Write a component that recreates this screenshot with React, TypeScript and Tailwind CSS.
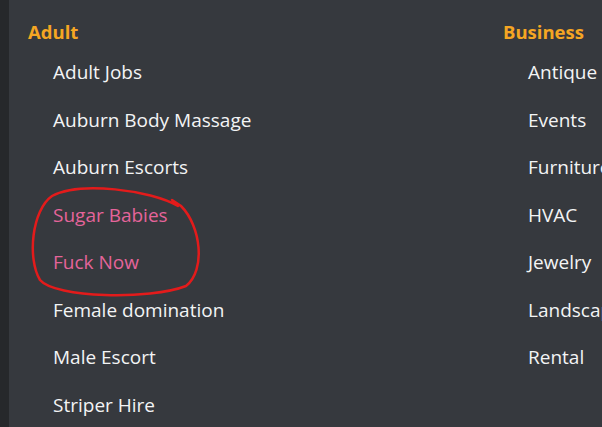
import React from "react"

const adult = [
  { label: "Adult Jobs" },
  { label: "Auburn Body Massage" },
  { label: "Auburn Escorts" },
  { label: "Sugar Babies", hot: true },
  { label: "Fuck Now", hot: true },
  { label: "Female domination" },
  { label: "Male Escort" },
  { label: "Striper Hire" },
]

const business = ["Antique", "Events", "Furniture", "HVAC", "Jewelry", "Landscaping", "Rental"]

function Column({ title, items }: { title: string; items: { label: string; hot?: boolean }[] }) {
  return (
    <div className="flex flex-col">
      <h3 className="h-[24px] leading-[24px] text-[18.5px] font-bold text-[#f5a623] mt-[20px]">{title}</h3>
      <ul className="pl-[25px] mt-[5px]">
        {items.map((it) => (
          <li
            key={it.label}
            className={
              "h-[47.5px] leading-[47.5px] text-[19px] whitespace-nowrap " +
              (it.hot ? "text-[#e5649a]" : "text-[#f3f4f5]")
            }
          >
            {it.label}
          </li>
        ))}
      </ul>
    </div>
  )
}

export default function App() {
  return (
    <div
      className="flex w-[602px] h-[427px] overflow-hidden bg-[#36393e]"
      style={{ fontFamily: '"Segoe UI", "Open Sans", sans-serif' }}
    >
      <div className="w-[9px] shrink-0 bg-[#26282b]" />
      <div className="relative flex pl-[19px]">
        <div className="w-[475px] shrink-0">
          <Column title="Adult" items={adult} />
        </div>
        <div className="shrink-0">
          <Column title="Business" items={business.map((b) => ({ label: b }))} />
        </div>
        {/* hand-drawn annotation */}
        <svg
          className="absolute left-[-9px] top-0 pointer-events-none"
          width="240"
          height="320"
          viewBox="0 0 240 320"
        >
          <path
            d="M178 206 C150 190, 80 181, 52 196 C32 210, 27 258, 40 280 C55 298, 150 300, 186 286 C206 270, 201 226, 181 206 L172 200"
            fill="none"
            stroke="#e31b1b"
            strokeWidth="2.5"
            strokeLinecap="round"
          />
        </svg>
      </div>
    </div>
  )
}
